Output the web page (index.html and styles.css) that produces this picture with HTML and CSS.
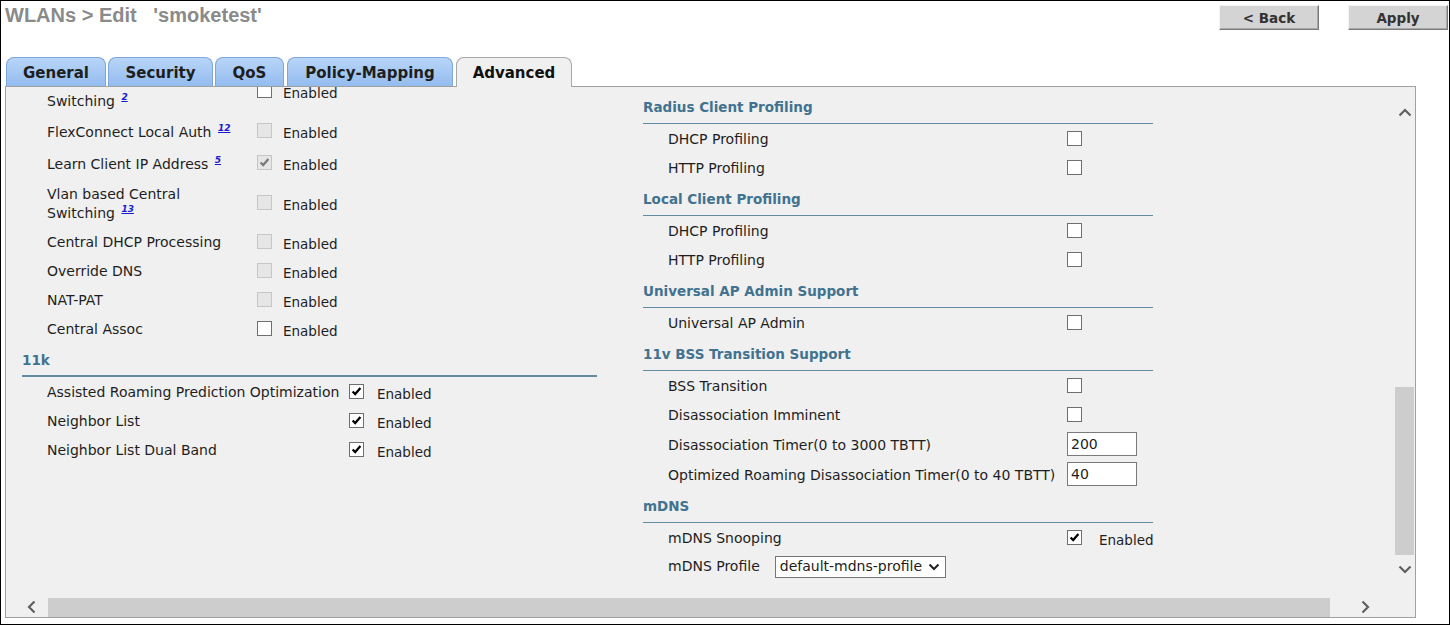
FILE: index.html
```html
<!DOCTYPE html>
<html>
<head>
<meta charset="utf-8">
<link rel="stylesheet" href="styles.css">
</head>
<body>
<div class="window">
  <div class="topbar">
    <div class="title">WLANs &gt; Edit &nbsp;&nbsp;'smoketest'</div>
    <div class="actions">
      <button class="btn">&lt; Back</button>
      <button class="btn btn-apply">Apply</button>
    </div>
  </div>
  <div class="tabs">
    <div class="tab t-general">General</div>
    <div class="tab t-security">Security</div>
    <div class="tab t-qos">QoS</div>
    <div class="tab t-policy">Policy-Mapping</div>
    <div class="tab t-advanced active">Advanced</div>
  </div>
  <div class="panel">
    <div class="content">
      <div class="col left">
        <div class="row two">
          <div class="lbl">FlexConnect Local<br>Switching <a class="fn">2</a></div>
          <span class="cb"></span>
          <span class="en">Enabled</span>
        </div>
        <div class="row tall">
          <div class="lbl">FlexConnect Local Auth <a class="fn">12</a></div>
          <span class="cb dis"></span>
          <span class="en">Enabled</span>
        </div>
        <div class="row tall">
          <div class="lbl">Learn Client IP Address <a class="fn">5</a></div>
          <span class="cb dis on"><svg viewBox="0 0 15 15"><polyline points="3,7.5 6,10.5 12,3.5"/></svg></span>
          <span class="en">Enabled</span>
        </div>
        <div class="row two">
          <div class="lbl">Vlan based Central<br>Switching <a class="fn">13</a></div>
          <span class="cb dis"></span>
          <span class="en">Enabled</span>
        </div>
        <div class="row">
          <div class="lbl">Central DHCP Processing</div>
          <span class="cb dis"></span>
          <span class="en">Enabled</span>
        </div>
        <div class="row">
          <div class="lbl">Override DNS</div>
          <span class="cb dis"></span>
          <span class="en">Enabled</span>
        </div>
        <div class="row">
          <div class="lbl">NAT-PAT</div>
          <span class="cb dis"></span>
          <span class="en">Enabled</span>
        </div>
        <div class="row">
          <div class="lbl">Central Assoc</div>
          <span class="cb"></span>
          <span class="en">Enabled</span>
        </div>
        <div class="sec sec-left">11k</div>
        <div class="row k">
          <div class="lbl">Assisted Roaming Prediction Optimization</div>
          <span class="cb on"><svg viewBox="0 0 15 15"><polyline points="3,7.5 6,10.5 12,3.5"/></svg></span>
          <span class="en">Enabled</span>
        </div>
        <div class="row k">
          <div class="lbl">Neighbor List</div>
          <span class="cb on"><svg viewBox="0 0 15 15"><polyline points="3,7.5 6,10.5 12,3.5"/></svg></span>
          <span class="en">Enabled</span>
        </div>
        <div class="row k">
          <div class="lbl">Neighbor List Dual Band</div>
          <span class="cb on"><svg viewBox="0 0 15 15"><polyline points="3,7.5 6,10.5 12,3.5"/></svg></span>
          <span class="en">Enabled</span>
        </div>
      </div>

      <div class="col right">
        <div class="sec">Radius Client Profiling</div>
        <div class="row r"><div class="lbl">DHCP Profiling</div><span class="cb"></span></div>
        <div class="row r"><div class="lbl">HTTP Profiling</div><span class="cb"></span></div>
        <div class="sec">Local Client Profiling</div>
        <div class="row r"><div class="lbl">DHCP Profiling</div><span class="cb"></span></div>
        <div class="row r"><div class="lbl">HTTP Profiling</div><span class="cb"></span></div>
        <div class="sec">Universal AP Admin Support</div>
        <div class="row r"><div class="lbl">Universal AP Admin</div><span class="cb"></span></div>
        <div class="sec">11v BSS Transition Support</div>
        <div class="row r"><div class="lbl">BSS Transition</div><span class="cb"></span></div>
        <div class="row r"><div class="lbl">Disassociation Imminent</div><span class="cb"></span></div>
        <div class="row r inp"><div class="lbl">Disassociation Timer(0 to 3000 TBTT)</div><span class="txt">200</span></div>
        <div class="row r inp"><div class="lbl">Optimized Roaming Disassociation Timer(0 to 40 TBTT)</div><span class="txt">40</span></div>
        <div class="sec">mDNS</div>
        <div class="row r">
          <div class="lbl">mDNS Snooping</div>
          <span class="cb on"><svg viewBox="0 0 15 15"><polyline points="3,7.5 6,10.5 12,3.5"/></svg></span>
          <span class="en">Enabled</span>
        </div>
        <div class="row r">
          <div class="lbl lbl-sel">mDNS Profile
            <span class="sel">default-mdns-profile<svg class="chev" viewBox="0 0 12 8"><polyline points="1.5,1.5 6,6 10.5,1.5"/></svg></span>
          </div>
        </div>
      </div>
    </div>

    <div class="vscroll">
      <svg class="arr arr-up" viewBox="0 0 14 9"><polyline points="1.5,7.5 7,2 12.5,7.5"/></svg>
      <div class="vtrack"><div class="vthumb"></div></div>
      <svg class="arr arr-down" viewBox="0 0 14 9"><polyline points="1.5,1.5 7,7 12.5,1.5"/></svg>
    </div>
    <div class="hscroll">
      <svg class="harr" viewBox="0 0 9 14"><polyline points="7.5,1.5 2,7 7.5,12.5"/></svg>
      <div class="htrack"><div class="hthumb"></div></div>
      <svg class="harr" viewBox="0 0 9 14"><polyline points="1.5,1.5 7,7 1.5,12.5"/></svg>
    </div>
    <div class="corner"></div>
  </div>
</div>
</body>
</html>
```

FILE: styles.css
```css
html, body {
  margin: 0;
  padding: 0;
  background: #fff;
}

.window {
  width: 1450px;
  height: 625px;
  box-sizing: border-box;
  border: 1px solid #000;
  background: #fff;
  display: flex;
  flex-direction: column;
  overflow: hidden;
}

.topbar {
  height: 56px;
  display: flex;
  justify-content: space-between;
  align-items: flex-start;
  flex: none;
}

.title {
  font-family: "Liberation Sans", Arial, sans-serif;
  font-weight: bold;
  font-size: 20px;
  line-height: 24px;
  color: #8a8a8a;
  padding: 2px 0 0 4px;
  white-space: nowrap;
}

.actions {
  display: flex;
  gap: 29px;
  padding-top: 4px;
  margin-right: 1px;
}

.btn {
  width: 100px;
  height: 25px;
  box-sizing: border-box;
  margin: 0;
  padding: 0;
  background: #d4d4d4;
  border: 1px solid;
  border-color: #f4f4f4 #7a7a7a #7a7a7a #f4f4f4;
  box-shadow: inset -1px -1px 0 #a8a8a8;
  font-family: "DejaVu Sans", Verdana, sans-serif;
  font-weight: bold;
  font-size: 13.5px;
  color: #333;
}

.tabs {
  height: 29px;
  display: flex;
  gap: 2px;
  padding-left: 5px;
  flex: none;
  position: relative;
  z-index: 2;
}

.tab {
  box-sizing: border-box;
  height: 29px;
  border: 1px solid #7ea6da;
  border-bottom: none;
  border-radius: 8px 8px 0 0;
  background: linear-gradient(#b9d5f8, #93bcef);
  font-family: "DejaVu Sans", Verdana, sans-serif;
  font-weight: bold;
  font-size: 15px;
  line-height: 30px;
  color: #1e1e1e;
  text-align: center;
  white-space: nowrap;
}

.t-general { width: 100px; }
.t-security { width: 105px; }
.t-qos { width: 69px; }
.t-policy { width: 166px; margin-left: 1px; }
.t-advanced { width: 116px; margin-left: 1px; }

.tab.active {
  height: 30px;
  background: #f0f0f0;
  border-color: #a8a8a8;
  color: #111;
}

.panel {
  margin-left: 4px;
  width: 1411px;
  height: 532px;
  box-sizing: border-box;
  border: 1px solid #a0a0a0;
  background: #f0f0f0;
  display: grid;
  grid-template-columns: 1fr 21px;
  grid-template-rows: 1fr 20px;
  flex: none;
}

.content {
  overflow: hidden;
  display: flex;
  align-items: flex-start;
  padding-left: 16px;
  font-family: "DejaVu Sans", Verdana, sans-serif;
  font-size: 14px;
  color: #1e1e1e;
}

.col.left {
  width: 575px;
  margin-top: -20px;
}

.col.right {
  width: 510px;
  margin-left: 46px;
  padding-top: 3px;
}

.row {
  display: grid;
  grid-template-columns: 210px 26px auto;
  align-items: center;
  padding-left: 25px;
  height: 29px;
}

.row.tall { height: 32px; }
.row.two { height: 48px; }
.row.inp { height: 30px; }
.row.k { grid-template-columns: 302px 28px auto; }
.row.r { grid-template-columns: 399px 32px auto; }

.lbl {
  line-height: 19px;
  white-space: nowrap;
  padding-top: 2px;
}

.fn {
  color: #1a1ad0;
  text-decoration: underline;
  font-weight: bold;
  font-style: italic;
  font-size: 9px;
  line-height: 0;
  vertical-align: 6px;
  margin-left: 2px;
}

.en {
  font-size: 13.5px;
  padding-top: 4px;
}

.cb {
  width: 15px;
  height: 15px;
  box-sizing: border-box;
  border: 1px solid #6f6f6f;
  background: #fff;
  display: block;
  margin-bottom: 1px;
}

.cb.dis {
  border-color: #c6c6c6;
  background: #e6e6e6;
}

.cb svg {
  display: block;
  width: 13px;
  height: 13px;
  fill: none;
  stroke: #000;
  stroke-width: 2.6;
}

.cb.dis svg {
  stroke: #7a7a7a;
}

.sec {
  font-weight: bold;
  font-size: 13.5px;
  line-height: 20px;
  color: #41728f;
  padding: 7px 0 6px;
  border-bottom: 1px solid #628ba4;
}

.sec-left {
  border-bottom-width: 2px;
  padding-bottom: 5px;
}

.txt {
  width: 70px;
  height: 24px;
  box-sizing: border-box;
  border: 1px solid #7a7a7a;
  background: #fff;
  padding-left: 3px;
  line-height: 22px;
  display: block;
}

.lbl-sel {
  display: flex;
  align-items: center;
  padding-top: 0;
}

.sel {
  margin-left: 15px;
  width: 171px;
  height: 22px;
  box-sizing: border-box;
  border: 1px solid #767676;
  background: #fff;
  display: flex;
  align-items: center;
  justify-content: space-between;
  padding: 0 5px 0 4px;
}

.chev {
  width: 12px;
  height: 8px;
  fill: none;
  stroke: #222;
  stroke-width: 2;
}

.vscroll {
  display: flex;
  flex-direction: column;
  align-items: center;
}

.arr {
  width: 14px;
  height: 9px;
  fill: none;
  stroke: #606060;
  stroke-width: 2.2;
  flex: none;
}

.arr-up { margin-top: 21px; }
.arr-down { margin-bottom: 23px; }

.vtrack {
  flex: 1;
  width: 100%;
  display: flex;
  flex-direction: column;
  justify-content: flex-end;
  padding: 0 1px 0 1px;
  box-sizing: border-box;
}

.vthumb {
  height: 168px;
  margin-bottom: 10px;
  background: #cdcdcd;
}

.hscroll {
  display: flex;
  align-items: center;
}

.harr {
  width: 9px;
  height: 14px;
  fill: none;
  stroke: #606060;
  stroke-width: 2.2;
  flex: none;
  margin: 0 12px 0 21px;
}

.harr:last-child {
  margin: 0 24px 0 30px;
}

.htrack {
  flex: 1;
  height: 100%;
  padding-top: 1px;
  box-sizing: border-box;
}

.hthumb {
  height: 100%;
  width: 1282px;
  background: #cdcdcd;
}

.corner {
  background: #f0f0f0;
}
```
